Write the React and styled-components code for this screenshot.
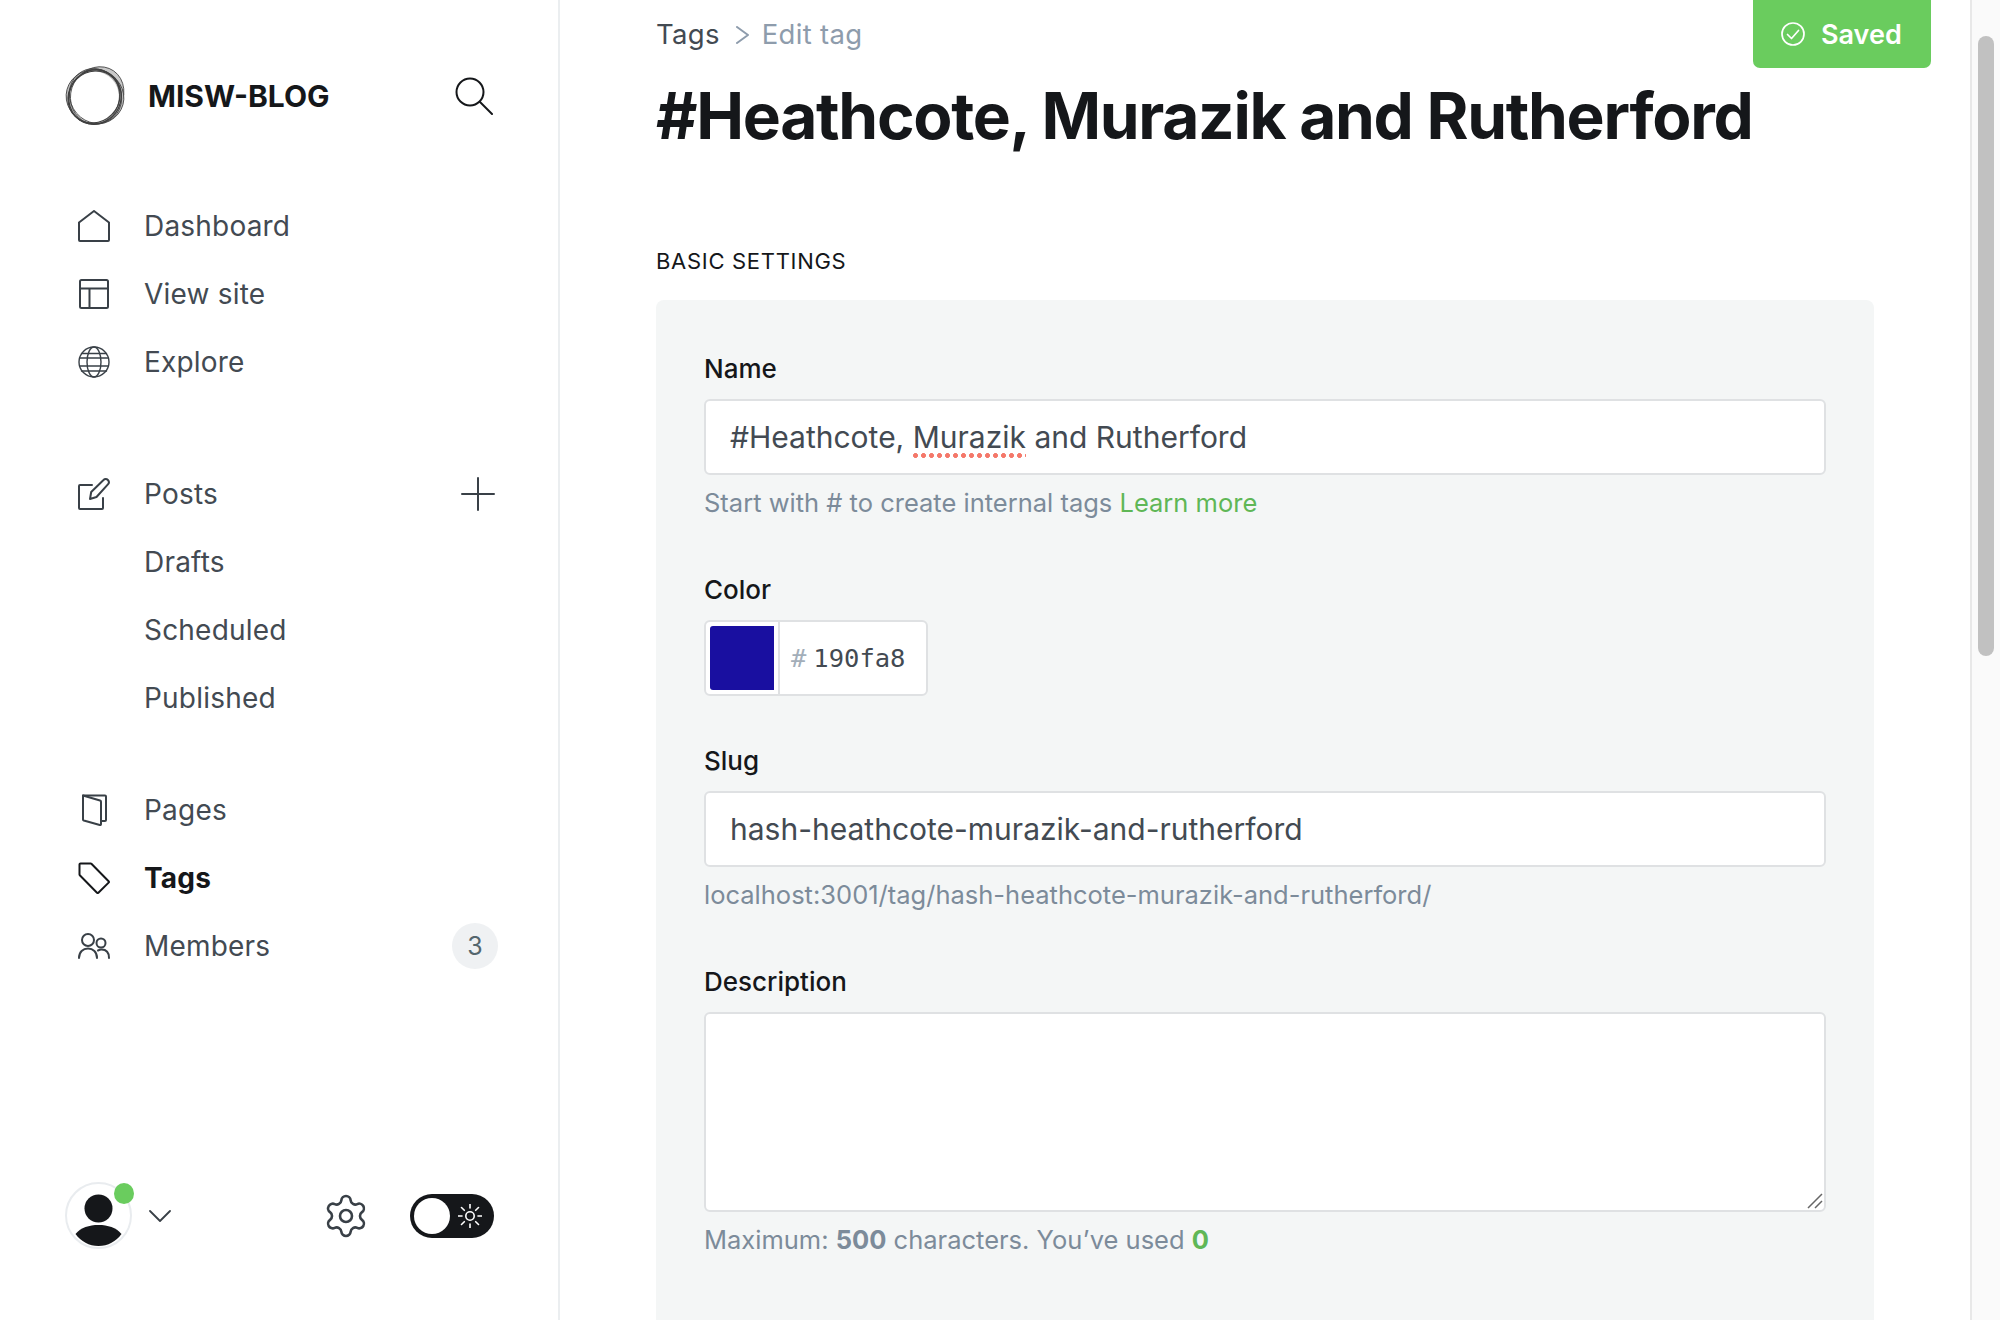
import React from "react";
import styled, { createGlobalStyle } from "styled-components";
import { Settings } from "lucide-react";

const GlobalStyle = createGlobalStyle`
  html, body {
    margin: 0;
    height: 100%;
    overflow: hidden;
    background: #fff;
  }
  * {
    box-sizing: border-box;
  }
`;

const Page = styled.div`
  display: flex;
  width: 2000px;
  height: 1320px;
  overflow: hidden;
  font-family: Inter, "Noto Sans", sans-serif;
  color: #15171a;
`;

/* sidebar */
const Sidebar = styled.aside`
  flex: 0 0 560px;
  display: flex;
  flex-direction: column;
  padding: 66px 66px 71px 0;
  border-right: 2px solid #ebeef0;
`;

const Brand = styled.div`
  display: flex;
  align-items: center;
  height: 60px;
  margin-bottom: 65px;
  padding-left: 65px;
`;

const BrandName = styled.span`
  margin-left: 21px;
  font-size: 30px;
  font-weight: 700;
`;

const SearchButton = styled.span`
  display: flex;
  margin-left: auto;
  margin-right: -1px;
`;

const NavGroup = styled.nav`
  display: flex;
  flex-direction: column;
  margin-bottom: ${(p) => p.$gap || 0}px;
`;

const NavItem = styled.a`
  display: flex;
  align-items: center;
  height: 68px;
  padding-top: 1px;
  font-size: 28px;
  letter-spacing: 0.2px;
  font-weight: ${(p) => (p.$active ? 700 : 400)};
  color: ${(p) => (p.$active ? "#15171a" : "#434a52")};
`;

const NavIcon = styled.span`
  display: flex;
  justify-content: center;
  flex: 0 0 32px;
  margin: 0 34px 0 78px;
`;

const SubItem = styled(NavItem)`
  padding-left: 144px;
`;

const AddButton = styled.span`
  display: flex;
  margin-left: auto;
  margin-right: -3px;
`;

const Badge = styled.span`
  display: flex;
  align-items: center;
  justify-content: center;
  width: 46px;
  height: 46px;
  margin-left: auto;
  margin-right: -6px;
  border-radius: 50%;
  background: #eff1f3;
  font-size: 25px;
  color: #54666d;
`;

const Footer = styled.div`
  display: flex;
  align-items: center;
  margin-top: auto;
  padding-left: 65px;
  margin-right: -2px;
`;

const Avatar = styled.div`
  position: relative;
  flex: 0 0 67px;
  height: 67px;
  border: 2px solid #e9ecef;
  border-radius: 50%;
`;

const OnlineDot = styled.span`
  position: absolute;
  top: -1px;
  right: -4px;
  width: 20px;
  height: 21px;
  border-radius: 50%;
  background: #6acc5e;
`;

const Chevron = styled.span`
  display: flex;
  margin-left: 17px;
`;

const GearButton = styled.span`
  display: flex;
  margin-left: auto;
  margin-right: 40px;
`;

const ThemeToggle = styled.div`
  display: flex;
  align-items: center;
  justify-content: space-between;
  width: 84px;
  height: 44px;
  padding: 0 12px 0 4px;
  border-radius: 22px;
  background: #15171a;
`;

const ToggleKnob = styled.span`
  width: 36px;
  height: 36px;
  border-radius: 50%;
  background: #fff;
`;

/* main column */
const Main = styled.main`
  flex: 1;
  min-width: 0;
  padding: 0 39px 0 96px;
`;

const TopBar = styled.div`
  display: flex;
  align-items: center;
  justify-content: space-between;
  height: 68px;
`;

const Breadcrumb = styled.div`
  display: flex;
  align-items: center;
  font-size: 27.5px;
  letter-spacing: 0.3px;
  color: #434a52;
`;

const CrumbArrow = styled.span`
  display: flex;
  margin: 2px 10px 0 14px;
`;

const CrumbCurrent = styled.span`
  color: #8e9cac;
`;

const SavedButton = styled.button`
  display: flex;
  align-items: center;
  gap: 16px;
  width: 178px;
  height: 68px;
  padding: 0 0 0 28px;
  border: 0;
  border-radius: 0 0 7px 7px;
  background: #6acc5e;
  font-family: inherit;
  font-size: 27px;
  font-weight: 600;
  color: #fff;
`;

const Title = styled.h1`
  margin: 12px 0 95px;
  font-size: 64px;
  line-height: 72px;
  font-weight: 700;
  letter-spacing: -1.3px;
  white-space: nowrap;
`;

const SectionTitle = styled.h2`
  margin: 0 0 25px;
  font-size: 22px;
  line-height: 28px;
  font-weight: 400;
  letter-spacing: 0.7px;
`;

const Panel = styled.section`
  width: 1218px;
  min-height: 1100px;
  padding: 54px 48px;
  border-radius: 8px;
  background: #f4f6f6;
`;

const Field = styled.div`
  margin-bottom: ${(p) => p.$gap || 57}px;
`;

const Label = styled.label`
  display: block;
  margin-bottom: 15px;
  font-size: 26px;
  line-height: 30px;
  font-weight: 500;
`;

const TextValue = styled.div`
  display: flex;
  align-items: center;
  height: 76px;
  padding: 0 24px;
  border: 2px solid #dfe1e3;
  border-radius: 6px;
  background: #fff;
  font-size: 30px;
  color: #434a52;
  white-space: pre;
`;

const SlugInput = styled.input`
  display: block;
  width: 100%;
  height: 76px;
  padding: 0 24px;
  border: 2px solid #dfe1e3;
  border-radius: 6px;
  background: #fff;
  font-family: inherit;
  font-size: 30px;
  color: #434a52;
  outline: none;
`;

const SpellError = styled.span`
  position: relative;
  &::after {
    content: "";
    position: absolute;
    left: 0;
    right: 0;
    bottom: -3px;
    height: 5px;
    background: radial-gradient(circle at 2.5px 2.5px, #f4786a 2.2px, transparent 2.5px) 0 0 / 8px 5px repeat-x;
  }
`;

const Hint = styled.p`
  margin: 13px 0 0;
  font-size: 25.5px;
  line-height: 30px;
  color: #7c8b9a;
  white-space: nowrap;
`;

const HintLink = styled.a`
  color: #5fb756;
`;

const HintCount = styled.b`
  font-weight: 700;
  color: ${(p) => (p.$green ? "#5fb756" : "#7c8b9a")};
`;

const ColorBox = styled.div`
  display: flex;
  width: 224px;
  height: 76px;
  border: 2px solid #dfe1e3;
  border-radius: 6px;
  background: #fff;
`;

const SwatchCell = styled.div`
  flex: 0 0 74px;
  padding: 4px;
  border-right: 2px solid #dfe1e3;
`;

const Swatch = styled.div`
  width: 64px;
  height: 64px;
  border-radius: 3px 0 0 3px;
  background: ${(p) => p.$color};
`;

const HexValue = styled.div`
  display: flex;
  align-items: center;
  padding-left: 11px;
  font-family: "DejaVu Sans Mono", "Liberation Mono", monospace;
  font-size: 25.5px;
  color: #434a52;
`;

const HexHash = styled.span`
  margin-right: 7px;
  color: #a3aeb9;
`;

const TextAreaWrap = styled.div`
  position: relative;
`;

const TextArea = styled.textarea`
  display: block;
  width: 100%;
  height: 200px;
  padding: 16px 24px;
  border: 2px solid #dfe1e3;
  border-radius: 6px;
  background: #fff;
  outline: none;
  resize: none;
`;

const ResizeGrip = styled.svg`
  position: absolute;
  right: 3px;
  bottom: 3px;
`;

/* fake window scrollbar */
const ScrollTrack = styled.div`
  flex: 0 0 30px;
  padding: 36px 6px 0;
  border-left: 2px solid #e8e8e8;
  background: #fafafa;
`;

const ScrollThumb = styled.div`
  width: 16px;
  height: 620px;
  border-radius: 8px;
  background: #c1c1c1;
`;

const Stroke = ({ size = 32, color = "#394047", width = 2, view = 32, children }) => (
  <svg
    width={size}
    height={size}
    viewBox={`0 0 ${view} ${view}`}
    fill="none"
    stroke={color}
    strokeWidth={width}
    strokeLinecap="round"
    strokeLinejoin="round"
  >
    {children}
  </svg>
);

const HomeIcon = () => (
  <Stroke>
    <path d="M1 12.500 16 1l15 11.500V30a1 1 0 0 1-1 1H2a1 1 0 0 1-1-1z" />
  </Stroke>
);

const LayoutIcon = () => (
  <Stroke>
    <rect x="2" y="2" width="28" height="28" rx="1.500" />
    <path d="M2 10.500h28M11.500 10.500V30" />
  </Stroke>
);

const GlobeIcon = () => (
  <Stroke width={1.4}>
    <circle cx="16" cy="16" r="15" />
    <ellipse cx="16" cy="16" rx="7" ry="15" />
    <path d="M1.500 12h29M1.500 20h29M3.500 7.500h25M3.500 25h25" />
  </Stroke>
);

const PostsIcon = () => (
  <Stroke>
    <path d="M14 7H2a1 1 0 0 0-1 1v22a1 1 0 0 0 1 1h22a1 1 0 0 0 1-1V20" />
    <path d="M12 21l1.200-7L25.500 2a3 3 0 0 1 4.400 0 3.200 3.200 0 0 1 0 4.400L18.500 19z" />
  </Stroke>
);

const PagesIcon = () => (
  <Stroke size={32}>
    <path d="M5 1.500h22a1 1 0 0 1 1 1V26a1 1 0 0 1-1 1h-4" />
    <path d="M5 1.500 22 6.500c.6.200 1 .6 1 1.200V30c0 .8-.5 1.200-1.200 1L5.800 26.500c-.5-.2-.8-.5-.8-1z" />
  </Stroke>
);

const TagIcon = () => (
  <Stroke color="#15171a">
    <path d="M2.500 1.500h10.200a1 1 0 0 1 .7.300l17.200 17.400a1 1 0 0 1 0 1.400L20.400 30.700a1 1 0 0 1-1.400 0L1.800 13.300a1 1 0 0 1-.3-.7V2.500a1 1 0 0 1 1-1z" />
  </Stroke>
);

const MembersIcon = () => (
  <Stroke>
    <circle cx="10" cy="10" r="6" />
    <circle cx="23" cy="13" r="4.500" />
    <path d="M1 28c0-6 4-9.500 9-9.500s9 3.500 9 9.500M20 20.500c1-.5 2-1 3.500-1 4.500 0 7.500 3 7.500 8.500" />
  </Stroke>
);

const SearchIcon = () => (
  <Stroke size={38} color="#15171a" view={38}>
    <circle cx="15" cy="15" r="13.500" />
    <path d="m25 25 12 12" />
  </Stroke>
);

const PlusIcon = () => (
  <Stroke size={34} view={34}>
    <path d="M17 1v32M1 17h32" />
  </Stroke>
);

const ChevronDown = () => (
  <Stroke size={22} view={22} width={1.8}>
    <path d="M1 6l10 10L21 6" />
  </Stroke>
);

const SunIcon = () => (
  <Stroke size={24} color="#fff" view={24} width={1.600}>
    <circle cx="12" cy="12" r="4.200" />
    <path d="M12 0v4M12 20v4M0 12h4M20 12h4M3.500 3.500l2.800 2.800M17.700 17.700l2.800 2.800M3.500 20.500l2.800-2.800M17.700 6.300l2.800-2.800" />
  </Stroke>
);

const CheckCircle = () => (
  <Stroke size={24} color="#fff" view={24} width={1.700}>
    <circle cx="12" cy="12" r="11" />
    <path d="m6.500 12.500 4 4 7-8" />
  </Stroke>
);

const BreadcrumbArrow = () => (
  <Stroke size={18} color="#8e9cac" view={18}>
    <path d="m3 1 11 8-11 8" />
  </Stroke>
);

// sketched ring: grey band on the upper right, thin ellipses piled on top
const BrandLogo = () => (
  <svg width="62" height="60" viewBox="0 0 62 60" fill="none" stroke="#3f3f3f" strokeWidth="0.8">
    <ellipse cx="31.500" cy="29.500" rx="26" ry="30" transform="rotate(35 31.500 29.500)" fill="#c9c9c9" />
    <ellipse cx="30" cy="31" rx="29" ry="27" transform="rotate(15 30 31)" fill="#bdbdbd" />
    <ellipse cx="29.500" cy="31" rx="24.500" ry="25.500" fill="#fff" stroke="none" />
    <ellipse cx="30" cy="31" rx="26" ry="27.500" transform="rotate(25 30 31)" strokeWidth="1.300" />
    <ellipse cx="29" cy="31" rx="25" ry="27" transform="rotate(45 29 31)" strokeWidth="1.100" />
    <ellipse cx="30" cy="30.500" rx="24.500" ry="27.500" transform="rotate(8 30 30.500)" />
    <ellipse cx="30.500" cy="30" rx="28" ry="25.500" transform="rotate(60 30.500 30)" />
  </svg>
);

const PersonIcon = () => (
  <svg width="63" height="63" viewBox="0 0 63 63">
    <ellipse cx="31.500" cy="24.500" rx="14" ry="14" fill="#15171a" />
    <path d="M8.500 50C14 43.500 22 41 31.500 41S49 43.500 54.500 50C49 57.500 41 62 31.500 62S14 57.500 8.500 50z" fill="#15171a" />
  </svg>
);

const App = () => (
  <Page>
    <GlobalStyle />
    <Sidebar>
      <Brand>
        <BrandLogo />
        <BrandName>MISW-BLOG</BrandName>
        <SearchButton>
          <SearchIcon />
        </SearchButton>
      </Brand>

      <NavGroup $gap={64}>
        <NavItem><NavIcon><HomeIcon /></NavIcon>Dashboard</NavItem>
        <NavItem><NavIcon><LayoutIcon /></NavIcon>View site</NavItem>
        <NavItem><NavIcon><GlobeIcon /></NavIcon>Explore</NavItem>
      </NavGroup>

      <NavGroup $gap={44}>
        <NavItem>
          <NavIcon><PostsIcon /></NavIcon>Posts
          <AddButton><PlusIcon /></AddButton>
        </NavItem>
        <SubItem>Drafts</SubItem>
        <SubItem>Scheduled</SubItem>
        <SubItem>Published</SubItem>
      </NavGroup>

      <NavGroup>
        <NavItem><NavIcon><PagesIcon /></NavIcon>Pages</NavItem>
        <NavItem $active><NavIcon><TagIcon /></NavIcon>Tags</NavItem>
        <NavItem>
          <NavIcon><MembersIcon /></NavIcon>Members
          <Badge>3</Badge>
        </NavItem>
      </NavGroup>

      <Footer>
        <Avatar>
          <PersonIcon />
          <OnlineDot />
        </Avatar>
        <Chevron><ChevronDown /></Chevron>
        <GearButton>
          <Settings size={48} color="#394047" strokeWidth={1.300} />
        </GearButton>
        <ThemeToggle>
          <ToggleKnob />
          <SunIcon />
        </ThemeToggle>
      </Footer>
    </Sidebar>

    <Main>
      <TopBar>
        <Breadcrumb>
          Tags
          <CrumbArrow><BreadcrumbArrow /></CrumbArrow>
          <CrumbCurrent>Edit tag</CrumbCurrent>
        </Breadcrumb>
        <SavedButton>
          <CheckCircle />
          Saved
        </SavedButton>
      </TopBar>

      <Title>#Heathcote, Murazik and Rutherford</Title>
      <SectionTitle>BASIC SETTINGS</SectionTitle>

      <Panel>
        <Field>
          <Label>Name</Label>
          <TextValue>
            #Heathcote, <SpellError>Murazik</SpellError> and Rutherford
          </TextValue>
          <Hint>
            Start with # to create internal tags <HintLink>Learn more</HintLink>
          </Hint>
        </Field>

        <Field $gap={50}>
          <Label>Color</Label>
          <ColorBox>
            <SwatchCell><Swatch $color="#190fa0" /></SwatchCell>
            <HexValue><HexHash>#</HexHash>190fa8</HexValue>
          </ColorBox>
        </Field>

        <Field>
          <Label>Slug</Label>
          <SlugInput defaultValue="hash-heathcote-murazik-and-rutherford" spellCheck={false} />
          <Hint>localhost:3001/tag/hash-heathcote-murazik-and-rutherford/</Hint>
        </Field>

        <Field>
          <Label>Description</Label>
          <TextAreaWrap>
            <TextArea />
            <ResizeGrip width="16" height="16" viewBox="0 0 16 16" stroke="#666" strokeWidth="1.500">
              <path d="M1 15 15 1M8 15l7-7" />
            </ResizeGrip>
          </TextAreaWrap>
          <Hint>
            Maximum: <HintCount>500</HintCount> characters. You’ve used <HintCount $green>0</HintCount>
          </Hint>
        </Field>
      </Panel>
    </Main>

    <ScrollTrack>
      <ScrollThumb />
    </ScrollTrack>
  </Page>
);

export default App;
